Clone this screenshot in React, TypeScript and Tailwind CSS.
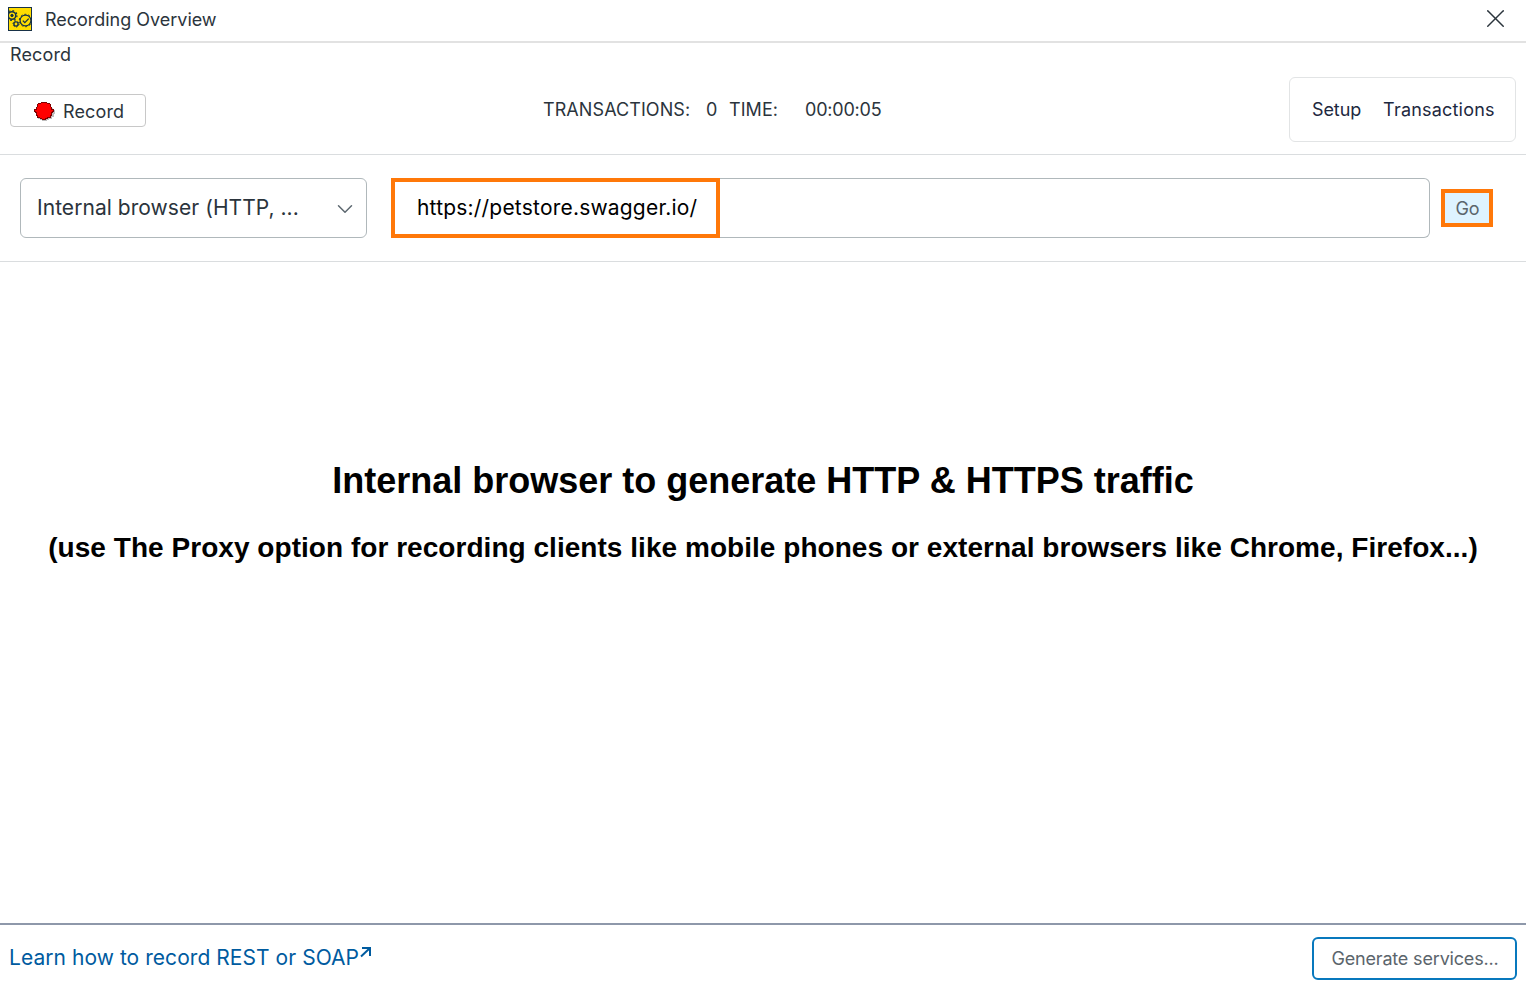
import { ChevronDown, X } from 'lucide-react';

function AppIcon() {
  return (
    <svg width="24" height="24" viewBox="0 0 24 24" fill="none" stroke="#183247">
      <rect x="0.5" y="0.5" width="23" height="23" fill="#ffdc00" />
      <circle cx="4" cy="8.5" r="3.8" strokeWidth="1.5" />
      <circle cx="4" cy="8.5" r="5" strokeWidth="1.2" strokeDasharray="1.7 2.2" />
      <circle cx="4" cy="8.5" r="1.2" fill="#183247" />
      <circle cx="8" cy="17" r="2.1" strokeWidth="1.4" />
      <circle cx="8" cy="17" r="3" strokeWidth="1" strokeDasharray="1.4 1.7" />
      <circle cx="17.5" cy="13.5" r="5.4" strokeWidth="1.2" />
      <circle cx="17.5" cy="13.5" r="6.2" strokeWidth="1" strokeDasharray="2 1.9" />
      <path d="M14.8 13.6l2 2 3.9-4" strokeWidth="1.3" />
    </svg>
  );
}

function RecordDot() {
  return (
    <svg width="21" height="19" viewBox="0 0 21 19" shapeRendering="crispEdges">
      <path d="M9 3h8v3h2v2h2v4h-1v3h-2v2h-3v1h-2v1H8v-1H6v-1H4v-2h5z" fill="#bdbdbd" />
      <path d="M7 0h6v1h3v1h1v3h1v2h2v3h-1v1h-1v3h-1v2h-3v1h-2v1H8v-1H6v-1H3v-2H2v-3H1v-1H0V7h2V5h1V2h1V1h3z" fill="#7d0000" />
      <path d="M7 1h6v1h3v3h1v3h2v1h-1v1h-1v3h-1v2h-3v1h-2v1H8v-1H6v-1H4v-2H3v-3H2V9H1V8h2V5h1V2h3z" fill="#ff0000" />
    </svg>
  );
}

export default function App() {
  return (
    <div className="flex h-[999px] w-[1526px] flex-col overflow-hidden bg-white font-['Inter',sans-serif] text-[#2b343c]">
      {/* Title bar */}
      <header className="flex h-[43px] shrink-0 items-center justify-between border-b-2 border-[#e2e2e2] pr-[15px] pl-2">
        <div className="flex items-center gap-[13px] pb-[3px]">
          <AppIcon />
          <h1 className="pt-px text-[18px] leading-6 tracking-[-0.02px]">Recording Overview</h1>
        </div>
        <button type="button" className="pb-1" aria-label="Close">
          <X className="h-[31px] w-[31px]" strokeWidth={1.5} absoluteStrokeWidth size={31} />
        </button>
      </header>

      {/* Record toolbar */}
      <section className="h-[112px] shrink-0 border-b border-[#dadddf] pr-[10px] pl-[10px]">
        <div className="h-[34px] text-[18px] leading-6 tracking-[0.15px]">Record</div>
        <div className="flex h-[65px] items-center">
          <button type="button" className="mt-[2px] flex h-[33px] w-[136px] items-center gap-2 rounded-[4px] border border-[#c8c8c8] pt-[2px] pl-[23px] text-[18px] tracking-[0.15px]">
            <RecordDot />
            Record
          </button>
          <div className="ml-[397px] flex text-[18px] leading-6 tracking-[0.08px]">
            <span className="w-[163px]">TRANSACTIONS:</span>
            <span className="w-[23px]">0</span>
            <span className="w-[76px]">TIME:</span>
            <span className="tracking-[-0.2px]">00:00:05</span>
          </div>
          <nav className="ml-auto flex h-[65px] w-[227px] items-center gap-[22px] rounded-[6px] border border-[#e2e4e5] pl-[22px] text-[18px] text-[#1d2840]">
            <a className="tracking-[-0.1px]">Setup</a>
            <a className="tracking-[0.2px]">Transactions</a>
          </nav>
        </div>
      </section>

      {/* Address row */}
      <section className="flex h-[107px] shrink-0 items-center border-b border-[#dadddf] pl-5">
        <button type="button" className="flex h-[60px] w-[347px] items-center justify-between rounded-[6px] border border-[#b0b8bb] pr-2 pl-4 text-[21px] tracking-[0.05px]">
          <span>Internal browser (HTTP, ...</span>
          <ChevronDown className="mt-px h-[26px] w-[26px] text-[#5d6870]" strokeWidth={1.5} absoluteStrokeWidth size={26} />
        </button>
        <div className="ml-6 flex h-[60px] w-[1039px] rounded-[6px] bg-white shadow-[inset_0_0_0_1px_#b0b8bb]">
          <div className="flex w-[329px] items-center border-4 border-[#ff7809] bg-white pl-[22px] text-[21px] tracking-[0.2px] text-black">
            https://petstore.swagger.io/
          </div>
        </div>
        <button type="button" className="ml-[11px] h-[38px] w-[52px] border-4 border-[#ff7809] bg-[#def3ff] pl-px text-[18px] tracking-[-0.2px] text-[#5b656c]">
          Go
        </button>
      </section>

      {/* Browser start page */}
      <main className="flex flex-1 flex-col items-center pt-[197px] font-['Liberation_Sans',sans-serif] font-bold whitespace-nowrap text-black">
        <h2 className="text-[36px] leading-[44px]">Internal browser to generate HTTP &amp; HTTPS traffic</h2>
        <h3 className="mt-[27px] text-[28px] leading-9 tracking-[0.04px]">
          (use The Proxy option for recording clients like mobile phones or external browsers like Chrome, Firefox...)
        </h3>
      </main>

      {/* Footer */}
      <footer className="flex h-[76px] shrink-0 justify-between border-t-2 border-[#8e98aa] pt-3 pr-[9px] pl-[9px]">
        <a className="flex h-[42px] items-center text-[21px] tracking-[0.05px] text-[#005b9f]">
          Learn how to record REST or SOAP
          <svg className="mb-3 ml-px" width="11" height="11" viewBox="0 0 11 11" fill="none" stroke="currentColor" strokeWidth="2">
            <path d="M2 1h8v8M10 1L1 9.5" />
          </svg>
        </a>
        <button type="button" className="h-[43px] w-[205px] rounded-[6px] border-2 border-[#0878bd] pl-px text-[18px] tracking-[-0.17px] text-[#5b656c]">
          Generate services...
        </button>
      </footer>
    </div>
  );
}
